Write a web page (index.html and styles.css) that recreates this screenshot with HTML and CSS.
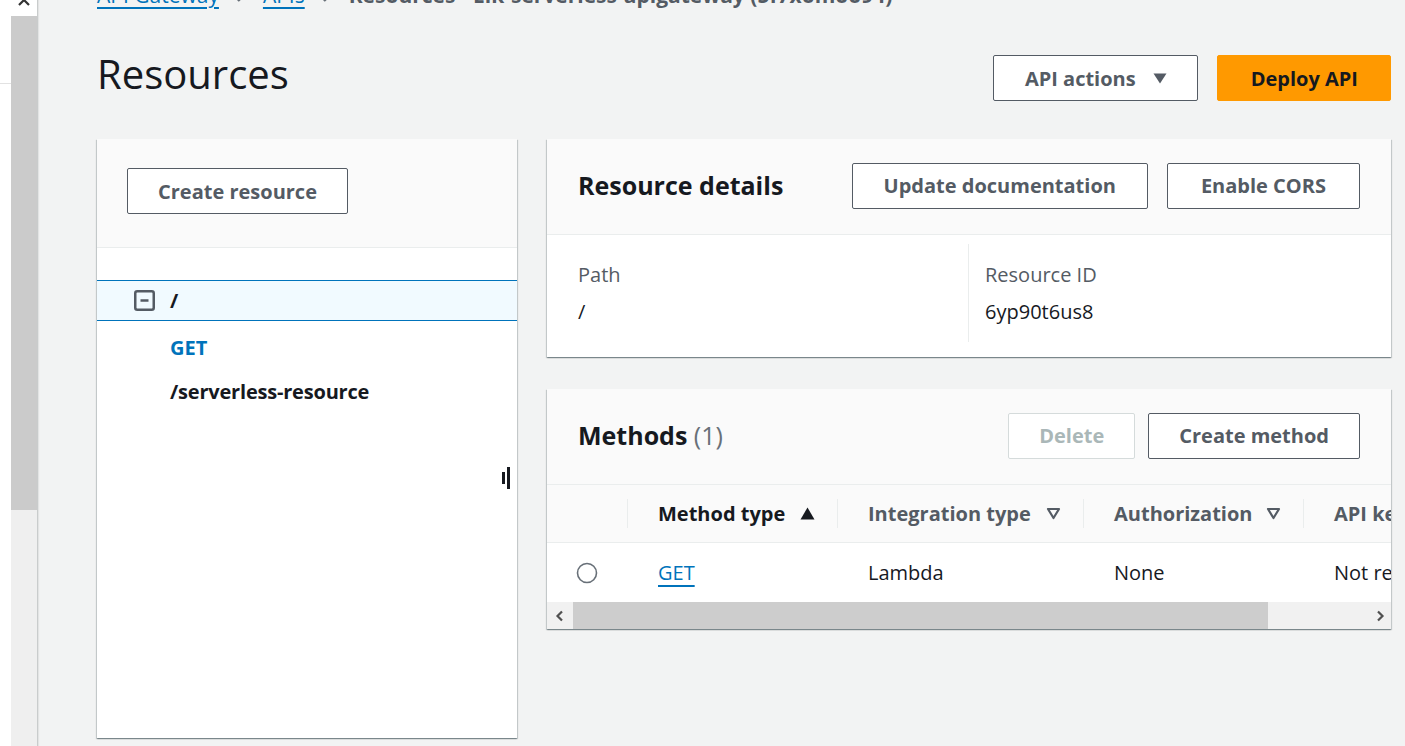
FILE: index.html
```html
<!DOCTYPE html>
<html lang="en">
<head>
<meta charset="utf-8">
<title>Resources - API Gateway</title>
<link rel="stylesheet" href="styles.css">
</head>
<body>
<div class="edge"><div class="edge-line"></div></div>
<div class="side-rail">
  <div class="rail-top">
    <svg class="rail-x" width="12" height="12" viewBox="0 0 12 12"><path d="M1 1 L11 11 M11 1 L1 11" stroke="#333" stroke-width="2.2" fill="none"/></svg>
  </div>
  <div class="rail-thumb"></div>
  <div class="rail-track"></div>
</div>
<main class="main">
  <nav class="crumbs">
    <a class="crumb-link" href="#">API Gateway</a>
    <svg class="chev" width="10" height="14" viewBox="0 0 10 14"><path d="M2 1 L8 7 L2 13" stroke="#687078" stroke-width="2.4" fill="none"/></svg>
    <a class="crumb-link" href="#">APIs</a>
    <svg class="chev" width="10" height="14" viewBox="0 0 10 14"><path d="M2 1 L8 7 L2 13" stroke="#687078" stroke-width="2.4" fill="none"/></svg>
    <span class="crumb-current">Resources - Elk-serverless-apigateway (5f7xomoo94)</span>
  </nav>

  <header class="page-head">
    <h1 class="page-title">Resources</h1>
    <div class="head-actions">
      <button class="btn btn-normal btn-dropdown">API actions
        <svg class="caret" width="14" height="11" viewBox="0 0 14 11"><path d="M0.5 0.5 H13.5 L7 10.5 Z" fill="#545b64"/></svg>
      </button>
      <button class="btn btn-primary">Deploy API</button>
    </div>
  </header>

  <div class="content">
    <section class="panel tree-panel">
      <div class="tree-head">
        <button class="btn btn-normal">Create resource</button>
      </div>
      <div class="tree">
        <div class="tree-row selected">
          <svg class="collapse" width="21" height="21" viewBox="0 0 21 21"><rect x="1.25" y="1.25" width="18.5" height="18.5" rx="2" fill="none" stroke="#545b64" stroke-width="2.5"/><path d="M6.5 10.5 H14.5" stroke="#545b64" stroke-width="2.5"/></svg>
          <span class="tree-text">/</span>
        </div>
        <div class="tree-row method"><span class="tree-method">GET</span></div>
        <div class="tree-row child"><span class="tree-text">/serverless-resource</span></div>
      </div>
      <div class="resize-handle"><span class="bar-short"></span><span class="bar-tall"></span></div>
    </section>

    <div class="right-col">
      <section class="panel">
        <div class="panel-head">
          <h2 class="panel-title">Resource details</h2>
          <div class="btn-group">
            <button class="btn btn-normal btn-mid">Update documentation</button>
            <button class="btn btn-normal btn-wide">Enable CORS</button>
          </div>
        </div>
        <div class="details">
          <div class="detail-col">
            <div class="detail-label">Path</div>
            <div class="detail-value">/</div>
          </div>
          <div class="detail-col second">
            <div class="detail-label">Resource ID</div>
            <div class="detail-value">6yp90t6us8</div>
          </div>
        </div>
      </section>

      <section class="panel methods-panel">
        <div class="panel-head">
          <h2 class="panel-title">Methods <span class="count">(1)</span></h2>
          <div class="btn-group small-gap">
            <button class="btn btn-disabled">Delete</button>
            <button class="btn btn-normal">Create method</button>
          </div>
        </div>
        <div class="table-wrap">
          <div class="table">
            <div class="tr thead">
              <div class="th col-sel"></div>
              <div class="th col-type sorted"><span>Method type</span>
                <svg width="15" height="13" viewBox="0 0 15 13"><path d="M7.5 0.5 L14.5 12.5 H0.5 Z" fill="#16191f"/></svg>
              </div>
              <div class="th col-int"><span>Integration type</span>
                <svg width="15" height="13" viewBox="0 0 15 13"><path d="M2 2 H13 L7.5 11 Z" fill="none" stroke="#545b64" stroke-width="2.2" stroke-linejoin="round"/></svg>
              </div>
              <div class="th col-auth"><span>Authorization</span>
                <svg width="15" height="13" viewBox="0 0 15 13"><path d="M2 2 H13 L7.5 11 Z" fill="none" stroke="#545b64" stroke-width="2.2" stroke-linejoin="round"/></svg>
              </div>
              <div class="th col-key"><span>API key</span></div>
            </div>
            <div class="tr tbody">
              <div class="td col-sel">
                <svg width="22" height="22" viewBox="0 0 22 22"><circle cx="11" cy="11" r="9.5" fill="#fff" stroke="#687078" stroke-width="1.6"/></svg>
              </div>
              <div class="td col-type"><a class="cell-link" href="#">GET</a></div>
              <div class="td col-int">Lambda</div>
              <div class="td col-auth">None</div>
              <div class="td col-key">Not required</div>
            </div>
          </div>
        </div>
        <div class="hscroll">
          <div class="hs-btn">
            <svg width="10" height="12" viewBox="0 0 10 12"><path d="M7 1.5 L2.5 6 L7 10.5" stroke="#505050" stroke-width="2.2" fill="none"/></svg>
          </div>
          <div class="hs-thumb"></div>
          <div class="hs-rest"></div>
          <div class="hs-btn right">
            <svg width="10" height="12" viewBox="0 0 10 12"><path d="M3 1.5 L7.5 6 L3 10.5" stroke="#505050" stroke-width="2.2" fill="none"/></svg>
          </div>
        </div>
      </section>
    </div>
  </div>
</main>
</body>
</html>
```

FILE: styles.css
```css
* { box-sizing: border-box; }
html, body { margin: 0; padding: 0; }
body {
  display: flex;
  height: 746px;
  overflow: hidden;
  font-family: "Open Sans", "Liberation Sans", sans-serif;
  font-size: 20px;
  color: #16191f;
  background: #f2f3f3;
}

.edge {
  width: 11px;
  background: #fff;
  flex: none;
}
.edge-line {
  margin-top: 83px;
  height: 1px;
  background: #e2e2e2;
}

.side-rail {
  width: 27px;
  flex: none;
  display: flex;
  flex-direction: column;
  border-right: 1px solid #c9cccc;
  box-shadow: 1px 0 1px rgba(0,0,0,0.06);
}
.rail-top {
  height: 16px;
  background: #fff;
  display: flex;
  justify-content: center;
  align-items: flex-start;
  overflow: hidden;
}
.rail-x { margin-top: -6px; }
.rail-thumb { height: 494px; background: #cbcbcb; }
.rail-track { flex: 1; background: #efefef; }

.main {
  flex: 1;
  padding: 0 14px 0 59px;
  min-width: 0;
}

.crumbs {
  margin-top: -18px;
  height: 26px;
  line-height: 26px;
  font-size: 21px;
  display: flex;
  align-items: center;
  white-space: nowrap;
}
.crumb-link {
  color: #0073bb;
  text-decoration: underline;
  text-decoration-thickness: 2px;
  text-underline-offset: 4px;
}
.chev { margin: 0 17px; }
.crumb-current { color: #545b64; font-weight: 700; }

.page-head {
  margin-top: 39px;
  display: flex;
  justify-content: space-between;
  align-items: flex-start;
}
.page-title {
  margin: 0;
  font-size: 40px;
  line-height: 54px;
  font-weight: 400;
  color: #16191f;
}
.head-actions {
  display: flex;
  gap: 19px;
  margin-top: 8px;
}

.btn {
  height: 46px;
  padding: 0 30px;
  font-family: inherit;
  font-size: 20px;
  font-weight: 700;
  border-radius: 2px;
  display: inline-flex;
  align-items: center;
  white-space: nowrap;
  cursor: pointer;
}
.btn-normal {
  background: #fff;
  border: 1px solid #545b64;
  color: #545b64;
}
.btn-mid { padding: 0 31px; }
.btn-wide { padding: 0 33px; }
.btn-dropdown { gap: 17px; padding: 0 30px 0 31px; }
.btn-primary {
  background: #ff9900;
  border: 1px solid #ff9900;
  color: #16191f;
  padding: 0 32px 0 33px;
}
.btn-disabled {
  background: #fff;
  border: 1px solid #d5dbdb;
  color: #aab7b8;
}

.content {
  margin-top: 38px;
  display: grid;
  grid-template-columns: 420px minmax(0, 1fr);
  column-gap: 30px;
  align-items: start;
}

.panel {
  background: #fff;
  box-shadow: 0 1px 1px 0 rgba(0,28,36,0.3), 1px 1px 1px 0 rgba(0,28,36,0.15), -1px 1px 1px 0 rgba(0,28,36,0.15);
  position: relative;
  overflow: hidden;
  min-width: 0;
}

.tree-panel { height: 599px; }
.tree-head {
  background: #fafafa;
  padding: 29px 30px 33px;
  border-bottom: 1px solid #eaeded;
}
.tree { padding-top: 32px; }
.tree-row {
  display: flex;
  align-items: center;
  height: 44px;
  font-weight: 700;
}
.tree-row.selected {
  height: 41px;
  background: #f1faff;
  border-top: 1px solid #0073bb;
  border-bottom: 1px solid #0073bb;
  padding-left: 37px;
  margin-bottom: 4px;
}
.collapse { margin-right: 15px; }
.tree-row.method, .tree-row.child { padding-left: 73px; }
.tree-method { color: #0073bb; }
.tree-text { color: #16191f; letter-spacing: -0.2px; }

.resize-handle {
  position: absolute;
  left: 405px;
  top: 328px;
  display: flex;
  align-items: center;
  gap: 2px;
}
.bar-short { width: 3px; height: 12px; background: #16191f; }
.bar-tall { width: 3px; height: 22px; background: #16191f; }

.right-col {
  display: flex;
  flex-direction: column;
  gap: 32px;
  min-width: 0;
}

.panel-head {
  height: 96px;
  background: #fafafa;
  border-bottom: 1px solid #eaeded;
  padding: 0 31px 2px;
  display: flex;
  justify-content: space-between;
  align-items: center;
}
.panel-title {
  margin: 0 0 2px;
  font-size: 25px;
  line-height: 34px;
  font-weight: 700;
  color: #16191f;
}
.count { font-weight: 400; color: #687078; }
.btn-group { display: flex; gap: 19px; }
.btn-group.small-gap { gap: 13px; }

.details {
  display: flex;
  padding: 9px 0 15px 31px;
}
.detail-col {
  width: 390px;
  padding-top: 17px;
  height: 98px;
}
.detail-col.second {
  border-left: 1px solid #eaeded;
  padding-left: 16px;
  flex: 1;
}
.detail-label { color: #545b64; line-height: 28px; }
.detail-value { color: #16191f; line-height: 28px; margin-top: 9px; }

.table-wrap { overflow: hidden; }
.table { width: 1000px; }
.tr { display: flex; }
.thead {
  background: #fafafa;
  height: 58px;
  align-items: center;
  border-bottom: 1px solid #eaeded;
}
.tbody { height: 59px; align-items: center; background: #fff; }
.th, .td { flex: none; }
.th {
  height: 29px;
  display: flex;
  align-items: center;
  justify-content: space-between;
  font-weight: 700;
  color: #545b64;
  border-left: 1px solid #eaeded;
  padding: 0 22px 0 30px;
  white-space: nowrap;
}
.th.col-sel { border-left: none; }
.th.sorted { color: #16191f; }
.col-sel { width: 80px; }
.col-type { width: 210px; }
.col-int { width: 246px; }
.col-auth { width: 220px; }
.col-key { width: 200px; }
.td {
  padding-left: 31px;
  color: #16191f;
  white-space: nowrap;
}
.td.col-sel { padding-left: 29px; display: flex; align-items: center; }
.cell-link {
  color: #0073bb;
  text-decoration: underline;
  text-decoration-thickness: 2px;
  text-underline-offset: 5px;
}

.hscroll {
  display: flex;
  height: 27px;
  background: #f1f1f1;
}
.hs-btn {
  width: 26px;
  display: flex;
  align-items: center;
  justify-content: center;
}
.hs-btn.right { width: 22px; }
.hs-thumb { width: 695px; background: #cdcdcd; }
.hs-rest { flex: 1; }
```
